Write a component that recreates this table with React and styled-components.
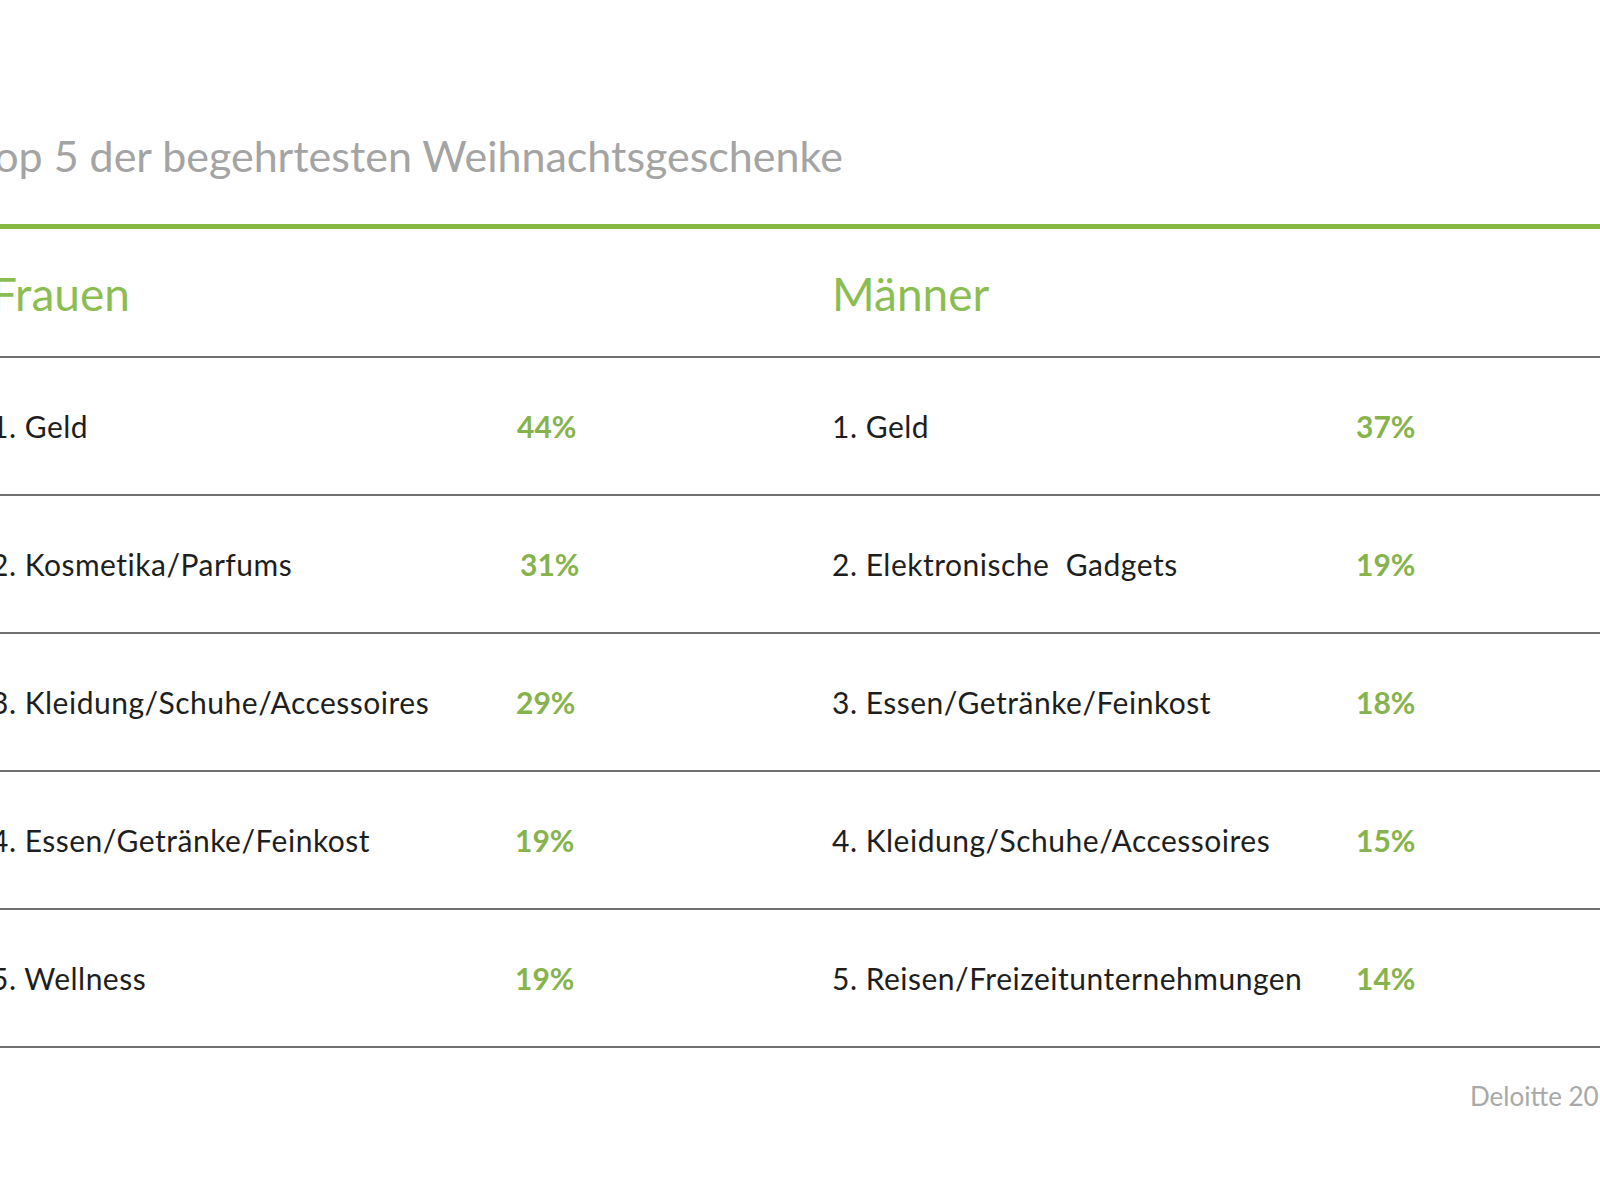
import React from 'react'
import styled, { createGlobalStyle } from 'styled-components'

const GlobalStyle = createGlobalStyle`
    body {
        margin: 0;
        background: #ffffff;
        overflow: hidden;
    }
`;

const Slide = styled.div`
    width: 1600px;
    height: 1199px;
    overflow: hidden;
    font-family: Lato, "Liberation Sans", sans-serif;
    background: #fff;
`;

const Title = styled.h1`
    margin: 132px 0 0 -26px;
    height: 48px;
    line-height: 48px;
    font-size: 43px;
    font-weight: 400;
    color: #a4a4a4;
    white-space: nowrap;
`;

const GreenRule = styled.div`
    margin-top: 44px;
    height: 5px;
    background: #86b844;
`;

const Table = styled.div`
    margin-left: -9px;
    border-bottom: 2px solid #707070;
`;

const Row = styled.div`
    display: grid;
    grid-template-columns: 526px 315px 524px 1fr;
    align-items: center;
    height: ${props => props.head ? '127px' : '136px'};
    border-top: ${props => props.head ? 'none' : '2px solid #707070'};
`;

const Heading = styled.div`
    grid-column: ${props => props.col};
    font-size: 46px;
    color: #8cbd52;
    padding-top: 2px;
`;

const Label = styled.div`
    font-size: 30px;
    letter-spacing: 0.5px;
    color: #1e1e1e;
    white-space: pre;
`;

const Percent = styled.div`
    font-size: 30px;
    font-weight: 700;
    color: #86b34c;
    margin-left: ${props => props.shift || 0}px;
`;

const Source = styled.div`
    margin: 32px 0 0 1470px;
    font-size: 26px;
    color: #a9a9a9;
    white-space: nowrap;
`;

const women = [
    ['1. Geld', '44%', 0],
    ['2. Kosmetika/Parfums', '31%', 3],
    ['3. Kleidung/Schuhe/Accessoires', '29%', -1],
    ['4. Essen/Getränke/Feinkost', '19%', -2],
    ['5. Wellness', '19%', -2],
]

const men = [
    ['1. Geld', '37%'],
    ['2. Elektronische  Gadgets', '19%'],
    ['3. Essen/Getränke/Feinkost', '18%'],
    ['4. Kleidung/Schuhe/Accessoires', '15%'],
    ['5. Reisen/Freizeitunternehmungen', '14%'],
]

export default function App() {
    return (
        <Slide>
            <GlobalStyle />
            <Title>Top 5 der begehrtesten Weihnachtsgeschenke</Title>
            <GreenRule />
            <Table>
                <Row head>
                    <Heading col="1">Frauen</Heading>
                    <Heading col="3">Männer</Heading>
                </Row>
                {women.map((w, i) => (
                    <Row key={i}>
                        <Label>{w[0]}</Label>
                        <Percent shift={w[2]}>{w[1]}</Percent>
                        <Label>{men[i][0]}</Label>
                        <Percent>{men[i][1]}</Percent>
                    </Row>
                ))}
            </Table>
            <Source>Deloitte 2017</Source>
        </Slide>
    )
}
